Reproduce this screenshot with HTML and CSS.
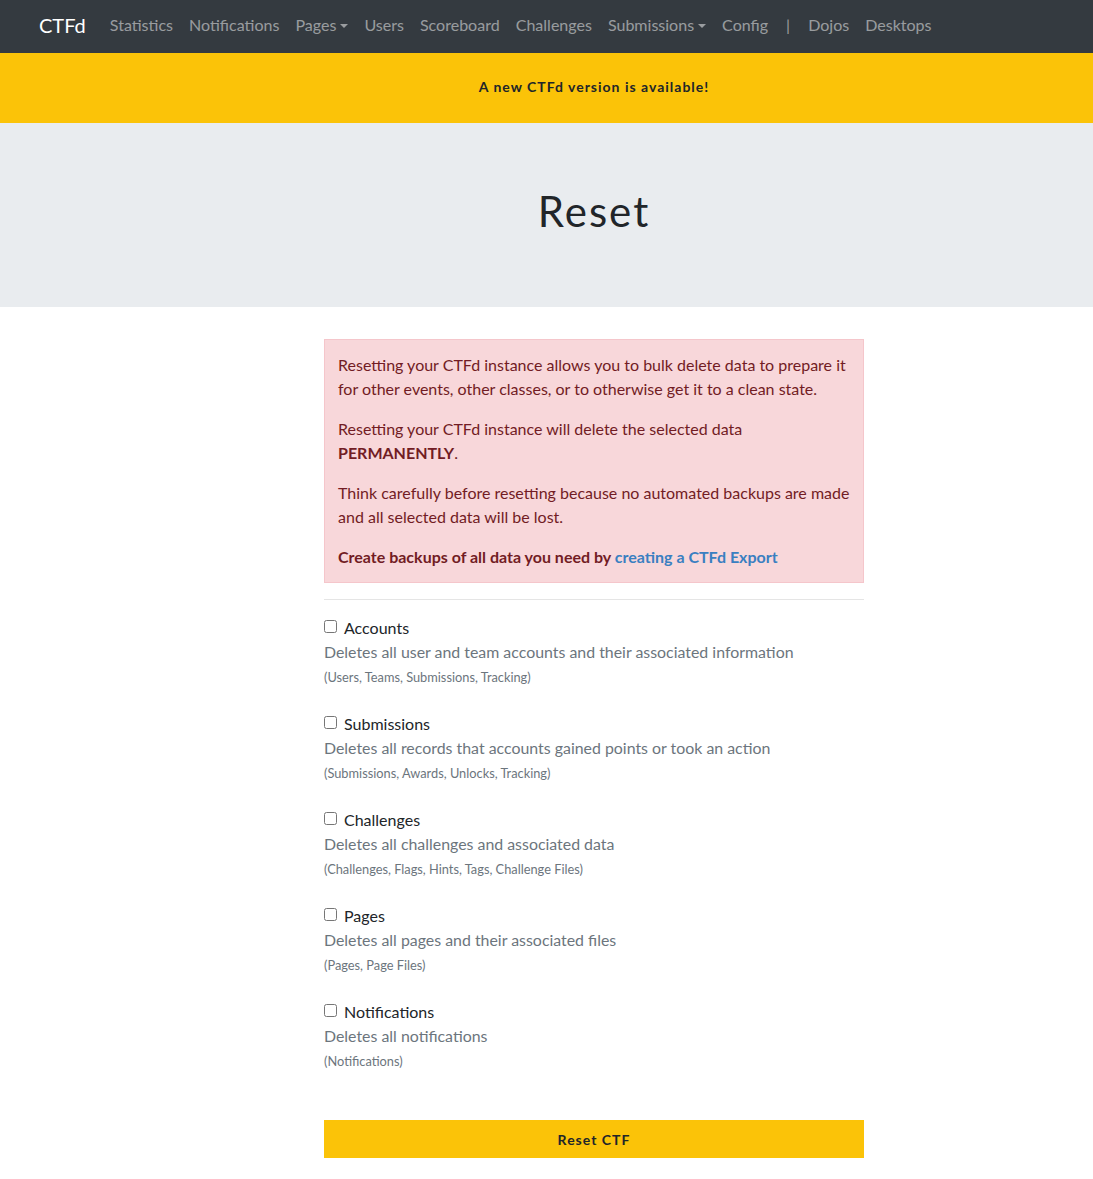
FILE: index.html
```html
<!DOCTYPE html>
<html>
<head>
<meta charset="utf-8">
<link rel="stylesheet" href="styles.css">
</head>
<body>
<nav class="navbar">
  <a class="brand" href="#">CTFd</a>
  <ul class="nav">
    <li><a href="#">Statistics</a></li>
    <li><a href="#">Notifications</a></li>
    <li><a href="#" class="dropdown">Pages</a></li>
    <li><a href="#">Users</a></li>
    <li><a href="#">Scoreboard</a></li>
    <li><a href="#">Challenges</a></li>
    <li><a href="#" class="dropdown">Submissions</a></li>
    <li><a href="#">Config</a></li>
    <li><span class="sep">|</span></li>
    <li><a href="#">Dojos</a></li>
    <li><a href="#">Desktops</a></li>
  </ul>
</nav>
<div class="banner">
  <div class="center-shift"><strong>A new CTFd version is available!</strong></div>
</div>
<div class="jumbotron">
  <h1 class="center-shift">Reset</h1>
</div>
<main class="content">
  <div class="alert">
    <p>Resetting your CTFd instance allows you to bulk delete data to prepare it for other events, other classes, or to otherwise get it to a clean state.</p>
    <p>Resetting your CTFd instance will delete the selected data <strong>PERMANENTLY</strong>.</p>
    <p>Think carefully before resetting because no automated backups are made and all selected data will be lost.</p>
    <p><strong>Create backups of all data you need by <a href="#">creating a CTFd Export</a></strong></p>
  </div>
  <hr class="divider">
  <form class="options">
    <div class="option">
      <label class="check"><input type="checkbox"> Accounts</label>
      <div class="desc">Deletes all user and team accounts and their associated information</div>
      <small class="note">(Users, Teams, Submissions, Tracking)</small>
    </div>
    <div class="option">
      <label class="check"><input type="checkbox"> Submissions</label>
      <div class="desc">Deletes all records that accounts gained points or took an action</div>
      <small class="note">(Submissions, Awards, Unlocks, Tracking)</small>
    </div>
    <div class="option">
      <label class="check"><input type="checkbox"> Challenges</label>
      <div class="desc">Deletes all challenges and associated data</div>
      <small class="note">(Challenges, Flags, Hints, Tags, Challenge Files)</small>
    </div>
    <div class="option">
      <label class="check"><input type="checkbox"> Pages</label>
      <div class="desc">Deletes all pages and their associated files</div>
      <small class="note">(Pages, Page Files)</small>
    </div>
    <div class="option">
      <label class="check"><input type="checkbox"> Notifications</label>
      <div class="desc">Deletes all notifications</div>
      <small class="note">(Notifications)</small>
    </div>
    <button type="button" class="btn-reset">Reset CTF</button>
  </form>
</main>
</body>
</html>
```

FILE: styles.css
```css
* { box-sizing: border-box; }
html, body { margin: 0; padding: 0; }
body {
  font-family: Lato, "Open Sans", "Liberation Sans", sans-serif;
  font-size: 16px;
  line-height: 1.5;
  color: #212529;
  background: #fff;
}
a { text-decoration: none; }

.navbar {
  height: 53px;
  background: #343a40;
  display: flex;
  align-items: center;
  padding: 0 0 4px 39px;
}
.brand {
  color: #fff;
  font-size: 20px;
  margin-right: 16px;
  line-height: 30px;
}
.nav {
  list-style: none;
  margin: 0;
  padding: 0;
  display: flex;
  align-items: center;
}
.nav a, .nav .sep {
  display: block;
  padding: 8px 8px;
  color: rgba(255,255,255,0.5);
  font-size: 16.05px;
  line-height: 24px;
}
.nav .sep { padding: 8px 10px; }
.dropdown::after {
  content: "";
  display: inline-block;
  margin-left: 4px;
  vertical-align: 3px;
  border-top: 4px solid;
  border-left: 4px solid transparent;
  border-right: 4px solid transparent;
}

.center-shift {
  padding-left: 95px;
  text-align: center;
}
.banner {
  background: #fbc308;
  height: 70px;
  display: flex;
  align-items: center;
  justify-content: center;
  padding-bottom: 4px;
}
.banner .center-shift {
  width: 100%;
  font-size: 14px;
  letter-spacing: 1px;
  color: #212529;
}
.jumbotron {
  background: #e9ecef;
  height: 184px;
  display: flex;
  align-items: center;
  padding-bottom: 8px;
}
.jumbotron h1 {
  width: 100%;
  margin: 0;
  font-weight: 400;
  font-size: 42px;
  letter-spacing: 2px;
  line-height: 1.2;
  color: #212529;
}

.content {
  width: 540px;
  margin: 32px 0 0 324px;
  padding-bottom: 21px;
}
.alert {
  background: #f8d7da;
  border: 1px solid #f5c6cb;
  color: #721c24;
  padding: 13px 13px;
  font-size: 16px;
  line-height: 24px;
}
.alert p { margin: 0 0 16px; }
.alert p:last-child { margin-bottom: 0; }
.alert strong { font-weight: 700; }
.alert a { color: #3a7fc1; }

.divider {
  border: 0;
  border-top: 1px solid rgba(0,0,0,0.1);
  margin: 16px 0 16px;
}
.option {
  height: 96px;
}
.check {
  display: flex;
  align-items: center;
  gap: 7px;
  line-height: 24px;
  color: #212529;
}
.check input {
  margin: 0;
  width: 13px;
  height: 13px;
  position: relative;
  top: -2px;
}
.desc {
  color: #6c757d;
  line-height: 24px;
  font-size: 15.9px;
}
.note {
  display: block;
  font-size: 12.8px;
  line-height: 26px;
  color: #6c757d;
}
.btn-reset {
  margin-top: 24px;
  display: block;
  width: 100%;
  height: 38px;
  border: 0;
  background: #fbc308;
  color: #212529;
  font-family: Lato, "Open Sans", sans-serif;
  font-weight: 700;
  font-size: 14px;
  letter-spacing: 1px;
}
```
